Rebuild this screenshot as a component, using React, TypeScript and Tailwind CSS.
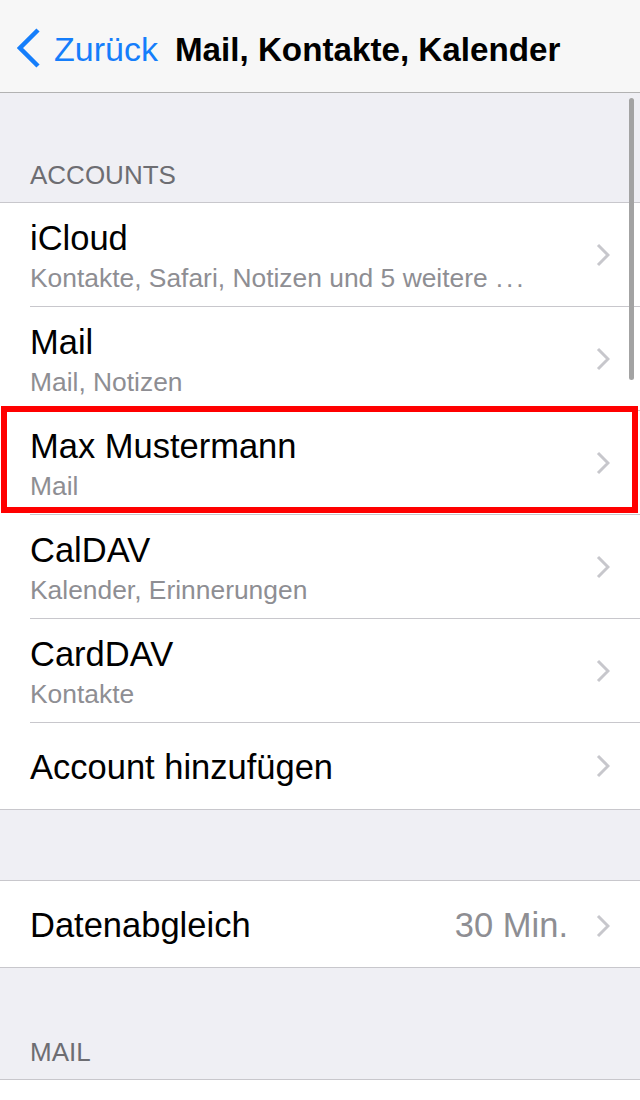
type Row = {
  title: string
  subtitle?: string
  highlight?: boolean
}

const accounts: Row[] = [
  { title: 'iCloud', subtitle: 'Kontakte, Safari, Notizen und 5 weitere' },
  { title: 'Mail', subtitle: 'Mail, Notizen' },
  { title: 'Max Mustermann', subtitle: 'Mail', highlight: true },
  { title: 'CalDAV', subtitle: 'Kalender, Erinnerungen' },
  { title: 'CardDAV', subtitle: 'Kontakte' },
]

function Chevron() {
  return (
    <svg width="14" height="24" viewBox="0 0 14 24" className="shrink-0">
      <polyline points="2,2 12,12 2,22" fill="none" stroke="#c7c7cc" strokeWidth="3" />
    </svg>
  )
}

function AccountRow({ title, subtitle, highlight }: Row) {
  return (
    <div className="relative h-[104px] pl-[30px]">
      <div className="h-full flex items-center border-b border-[#c8c7cc] pr-[30px]">
        <div className="flex-1 h-full pt-[15px]">
          <div className="text-[34.5px] leading-[40px] text-black">{title}</div>
          <div className="mt-[4px] text-[26.4px] leading-[32px] text-[#8e8e93]">
            {subtitle}
            {title === 'iCloud' && <span className="ml-[8px] tracking-[3px]">...</span>}
          </div>
        </div>
        <Chevron />
      </div>
      {highlight && (
        <span className="absolute left-[1px] right-[2px] top-[-5px] bottom-[2px] border-[6px] border-[#ff0000] pointer-events-none" />
      )}
    </div>
  )
}

function SectionHeader({ label, height }: { label: string; height: string }) {
  return (
    <div className={`${height} flex items-end px-[30px] pb-[12px]`}>
      <span className="text-[26px] leading-[30px] text-[#6d6d72]">{label}</span>
    </div>
  )
}

export default function App() {
  return (
    <div
      className="relative w-[640px] h-[1100px] overflow-hidden bg-[#efeff4]"
      style={{ fontFamily: '"Liberation Sans", Arial, sans-serif' }}
    >
      <nav className="h-[93px] bg-[#f7f7f7] border-b border-[#b2b2b2] flex items-center pt-[7px] pl-[17px]">
        <svg width="24" height="42" viewBox="0 0 24 42" className="shrink-0 -mt-[4px]">
          <polyline points="21,3 3,21 21,39" fill="none" stroke="#157efb" strokeWidth="4.5" />
        </svg>
        <span className="ml-[13px] text-[34px] text-[#157efb]">Zurück</span>
        <span className="ml-[17px] text-[33.2px] font-bold text-black">Mail, Kontakte, Kalender</span>
      </nav>

      <SectionHeader label="ACCOUNTS" height="h-[109px]" />

      <div className="bg-white border-t border-b border-[#c8c7cc]">
        {accounts.map((a) => (
          <AccountRow key={a.title} {...a} />
        ))}
        <div className="h-[86px] pl-[30px] pr-[30px] flex items-center">
          <span className="flex-1 pt-[3px] text-[34.5px] text-black">Account hinzufügen</span>
          <Chevron />
        </div>
      </div>

      <div className="h-[70px]" />

      <div className="bg-white border-t border-b border-[#c8c7cc]">
        <div className="h-[86px] pl-[30px] pr-[30px] flex items-center pt-[3px]">
          <span className="flex-1 text-[34.5px] text-black">Datenabgleich</span>
          <span className="mr-[28px] text-[34.5px] text-[#8e8e93]">30 Min.</span>
          <Chevron />
        </div>
      </div>

      <SectionHeader label="MAIL" height="h-[111px]" />

      <div className="bg-white border-t border-[#c8c7cc] h-[40px]" />

      <div className="absolute right-[6px] top-[98px] w-[5px] h-[282px] rounded-full bg-[#a3a3a3]" />
    </div>
  )
}
